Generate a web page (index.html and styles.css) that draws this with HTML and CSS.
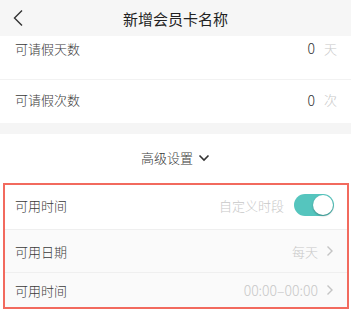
FILE: index.html
```html
<!DOCTYPE html>
<html lang="zh">
<head>
<meta charset="utf-8">
<link rel="stylesheet" href="styles.css">
</head>
<body>
<header class="nav">
  <svg class="back" width="12" height="18" viewBox="0 0 12 18"><path d="M10 1.5 L2.5 9 L10 16.5" fill="none" stroke="#333" stroke-width="1.4"/></svg>
  <div class="title">新增会员卡名称</div>
</header>
<div class="row first">
  <span class="label">可请假天数</span>
  <span class="value"><span class="num">0</span><span class="unit">天</span></span>
</div>
<div class="row second">
  <span class="label">可请假次数</span>
  <span class="value"><span class="num">0</span><span class="unit">次</span></span>
</div>
<div class="gap"></div>
<div class="adv">
  <span>高级设置</span>
  <svg width="12" height="8" viewBox="0 0 12 8"><path d="M1.5 1.5 L6 6 L10.5 1.5" fill="none" stroke="#333" stroke-width="1.6"/></svg>
</div>
<div class="box">
  <div class="brow white">
    <span class="label">可用时间</span>
    <span class="value"><span class="muted">自定义时段</span><span class="toggle"><span class="knob"></span></span></span>
  </div>
  <div class="brow">
    <span class="label">可用日期</span>
    <span class="value"><span class="muted">每天</span><svg class="arr" width="8" height="12" viewBox="0 0 8 12"><path d="M1.5 1.5 L6 6 L1.5 10.5" fill="none" stroke="#c4c4c4" stroke-width="1.4"/></svg></span>
  </div>
  <div class="brow last">
    <span class="label">可用时间</span>
    <span class="value"><span class="muted time">00:00–00:00</span><svg class="arr" width="8" height="12" viewBox="0 0 8 12"><path d="M1.5 1.5 L6 6 L1.5 10.5" fill="none" stroke="#c4c4c4" stroke-width="1.4"/></svg></span>
  </div>
</div>
</body>
</html>
```
FILE: styles.css
```css
* { box-sizing: border-box; }
body {
  margin: 0;
  background: #fff;
  font-family: "Noto Sans CJK SC", "Noto Sans", sans-serif;
  font-weight: 300;
  color: #3a3a3a;
  width: 351px;
  height: 315px;
  overflow: hidden;
}
.nav {
  height: 36px;
  background: #f6f6f6;
  display: flex;
  align-items: center;
  justify-content: center;
  position: relative;
}
.back { position: absolute; left: 12px; top: 9px; }
.title { font-size: 15px; color: #222; font-weight: 400; }
.row {
  display: flex;
  align-items: center;
  justify-content: space-between;
  padding: 0 14px 0 15px;
  font-size: 13px;
}
.row.first {
  height: 44px;
  padding-bottom: 19px;
  border-bottom: 1px solid #f2f2f2;
}
.row.second { height: 43px; padding-bottom: 4px; }
.value { display: flex; align-items: center; }
.num { color: #333; margin-right: 9px; font-size: 14px; }
.unit { color: #c8c8c8; }
.gap { height: 11px; background: #f5f5f5; }
.adv {
  height: 49px;
  display: flex;
  align-items: center;
  justify-content: center;
  gap: 5px;
  font-size: 13px;
  padding-bottom: 2px;
}
.adv svg { margin-top: 1px; }
.box {
  margin: 0 2px 0 3px;
  border: 2px solid #f26a5e;
  height: 126px;
  display: flex;
  flex-direction: column;
}
.brow {
  height: 43px;
  display: flex;
  align-items: center;
  justify-content: space-between;
  padding: 0 13px 0 10px;
  background: #fafafa;
  border-bottom: 1px solid #efefef;
  font-size: 13px;
}
.brow.white { background: #fff; height: 45px; padding-bottom: 4px; }
.brow.last { border-bottom: none; flex: 1; }
.muted { color: #c8c8c8; }
.time { font-size: 14px; }
.arr { margin-left: 8px; flex-shrink: 0; }
.toggle {
  flex-shrink: 0;
  margin-left: 10px;
  width: 40px;
  height: 22px;
  border-radius: 11px;
  background: #55c5be;
  position: relative;
}
.knob {
  position: absolute;
  right: 1px;
  top: 1px;
  width: 20px;
  height: 20px;
  border-radius: 50%;
  background: #fff;
  box-shadow: 0 1px 2px rgba(0,0,0,0.3);
}
```
